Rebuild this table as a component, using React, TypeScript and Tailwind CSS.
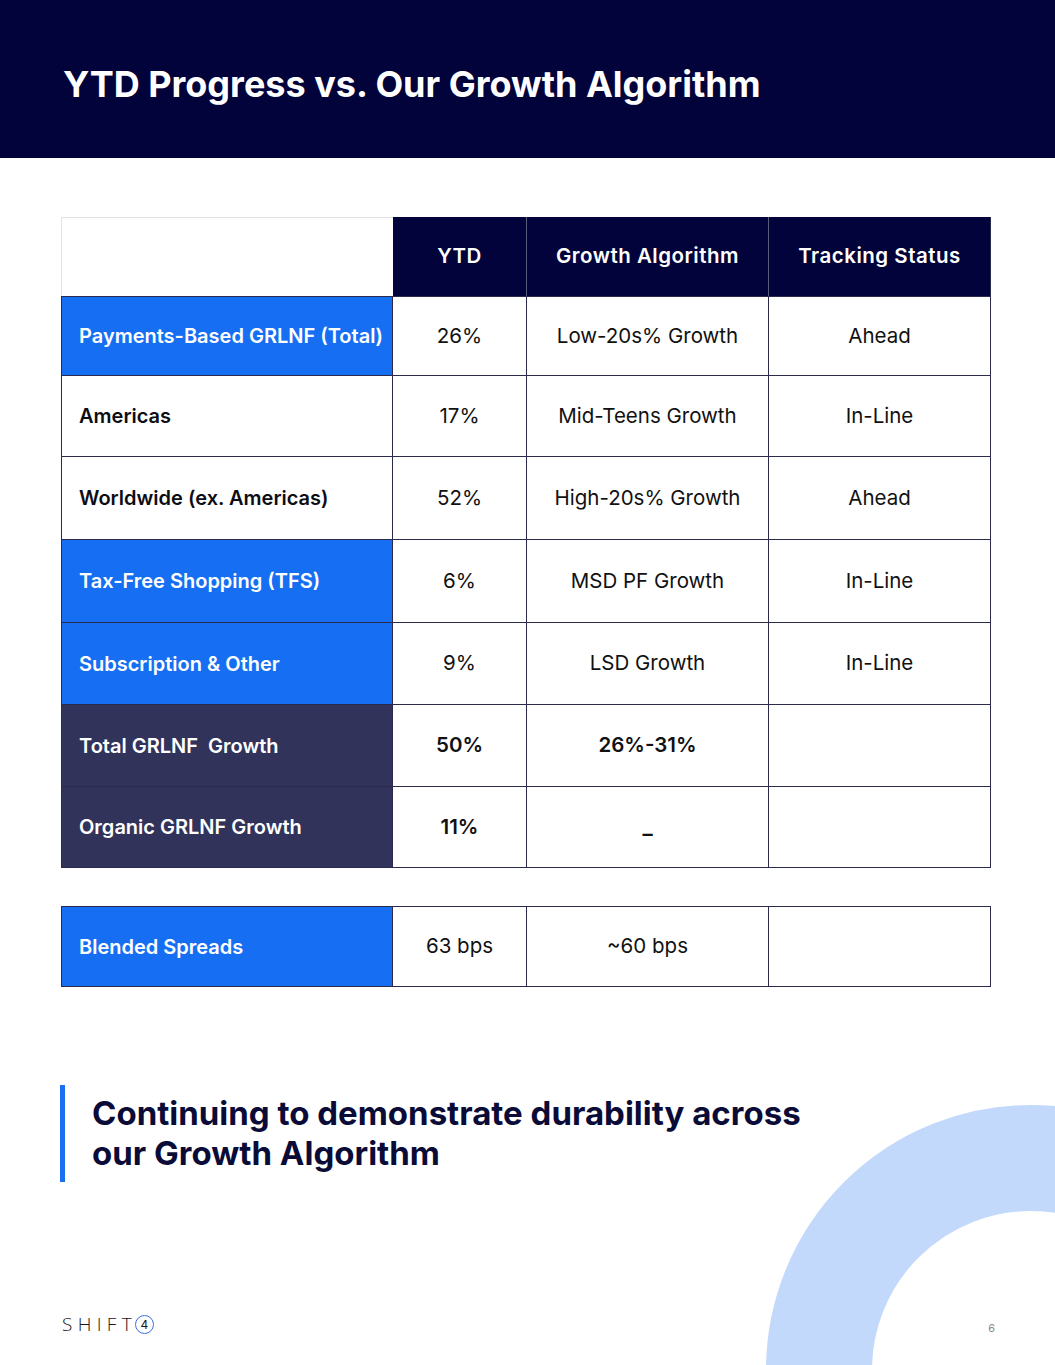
import React from "react";

const cols = "grid grid-cols-[332px_134px_242px_222px]";

type Row = {
  label: string;
  kind: "blue" | "white" | "navy";
  ytd: string;
  algo: string;
  status: string;
  bold?: boolean;
  h: string;
};

const rows: Row[] = [
  { label: "Payments-Based GRLNF (Total)", kind: "blue", ytd: "26%", algo: "Low-20s% Growth", status: "Ahead", h: "h-[80px]" },
  { label: "Americas", kind: "white", ytd: "17%", algo: "Mid-Teens Growth", status: "In-Line", h: "h-[81px]" },
  { label: "Worldwide (ex. Americas)", kind: "white", ytd: "52%", algo: "High-20s% Growth", status: "Ahead", h: "h-[83px]" },
  { label: "Tax-Free Shopping (TFS)", kind: "blue", ytd: "6%", algo: "MSD PF Growth", status: "In-Line", h: "h-[83px]" },
  { label: "Subscription & Other", kind: "blue", ytd: "9%", algo: "LSD Growth", status: "In-Line", h: "h-[82px]" },
  { label: "Total GRLNF  Growth", kind: "navy", ytd: "50%", algo: "26%-31%", status: "", bold: true, h: "h-[82px]" },
  { label: "Organic GRLNF Growth", kind: "navy", ytd: "11%", algo: "–", status: "", bold: true, h: "h-[81px]" },
];

const labelBg: Record<Row["kind"], string> = {
  blue: "bg-[#166ef3] text-white",
  white: "bg-white text-[#0d0d14]",
  navy: "bg-[#31335a] text-white",
};

function BodyRow({ r, first }: { r: Row; first?: boolean }) {
  const cell = "flex items-center justify-center border-r border-b border-[#2a2b4a] text-[20.5px] text-[#111]";
  return (
    <div className={`${cols} ${r.h}`}>
      <div
        className={`flex items-center pl-[17px] border-l border-r border-b border-[#2a2b4a] font-semibold text-[20px] ${labelBg[r.kind]} ${first ? "border-t" : ""}`}
      >
        {r.label.includes("  ") ? <span className="whitespace-pre">{r.label}</span> : r.label}
      </div>
      <div className={`${cell} ${r.bold ? "font-semibold" : ""} ${first ? "border-t" : ""}`}>{r.ytd}</div>
      <div className={`${cell} ${r.bold ? "font-semibold" : ""} ${first ? "border-t" : ""} ${r.algo === "–" ? "pt-[14px]" : ""}`}>
        {r.algo}
      </div>
      <div className={`${cell} ${first ? "border-t" : ""}`}>{r.status}</div>
    </div>
  );
}

export default function App() {
  return (
    <div
      className="relative w-[1055px] h-[1365px] overflow-hidden bg-white flex flex-col"
      style={{ fontFamily: "Inter, 'Open Sans', sans-serif" }}
    >
      {/* decorative ring */}
      <svg
        className="absolute right-0 bottom-0"
        width="300"
        height="265"
        viewBox="0 0 300 265"
      >
        <circle cx="276" cy="270" r="212" fill="none" stroke="#c3d9fb" strokeWidth="106" />
      </svg>

      {/* header */}
      <div className="h-[158px] shrink-0 bg-[#02033a] flex items-center px-[63px] pt-[10px]">
        <h1 className="text-white font-bold text-[36px] leading-none">
          YTD Progress vs. Our Growth Algorithm
        </h1>
      </div>

      {/* main table */}
      <div className="mt-[59px] ml-[61px] w-[930px] flex flex-col">
        <div className={`${cols} h-[79px]`}>
          <div className="border-l border-t border-[#e2e2e6] bg-white" />
          <div className="bg-[#02033a] text-white font-semibold text-[20.5px] tracking-[0.5px] flex items-center justify-center border-r border-[#5a5b7a]">
            YTD
          </div>
          <div className="bg-[#02033a] text-white font-semibold text-[20.5px] tracking-[0.5px] flex items-center justify-center border-r border-[#5a5b7a]">
            Growth Algorithm
          </div>
          <div className="bg-[#02033a] text-white font-semibold text-[20.5px] tracking-[0.5px] flex items-center justify-center border-r border-[#2a2b4a]">
            Tracking Status
          </div>
        </div>
        {rows.map((r, i) => (
          <BodyRow key={i} r={r} first={i === 0} />
        ))}
      </div>

      {/* blended spreads */}
      <div className="mt-[38px] ml-[61px] w-[930px]">
        <BodyRow
          r={{ label: "Blended Spreads", kind: "blue", ytd: "63 bps", algo: "~60 bps", status: "", h: "h-[81px]" }}
          first
        />
      </div>

      {/* quote */}
      <div className="relative mt-[98px] ml-[60px] flex">
        <div className="w-[5px] h-[97px] bg-[#1a6ff0]" />
        <p className="ml-[27px] pt-[8px] text-[#0b0b38] font-bold text-[33px] leading-[40px]">
          Continuing to demonstrate durability across
          <br />
          our Growth Algorithm
        </p>
      </div>

      {/* footer */}
      <div className="relative mt-auto mb-[29px] mx-[62px] flex items-center justify-between">
        <div className="flex items-center">
          <span
            className="text-[19px] tracking-[0.28em] text-[#15151c] font-light leading-none"
            style={{ fontFamily: "'Open Sans', sans-serif" }}
          >
            SHIFT
          </span>
          <span className="ml-[-2px] w-[19px] h-[19px] rounded-full border-[1.5px] border-[#3a6fe3] flex items-center justify-center text-[12px] text-[#15151c] leading-none">
            4
          </span>
        </div>
        <span className="mr-[-2px] mt-[6px] text-[11px] text-[#8a8a8a]">
          6
        </span>
      </div>
    </div>
  );
}
